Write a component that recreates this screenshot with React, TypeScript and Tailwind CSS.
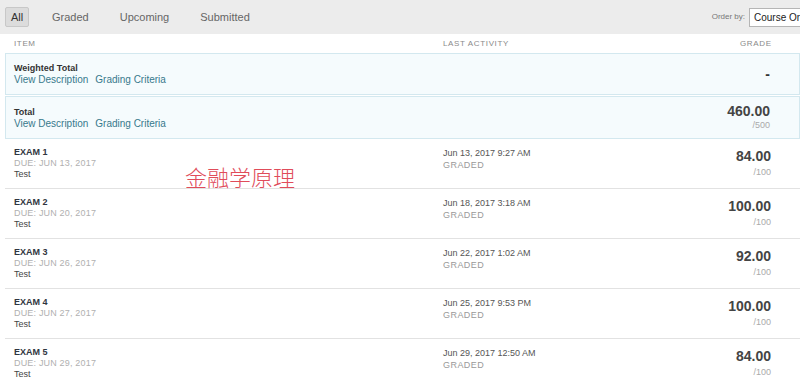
const exams = [
  { name: "EXAM 1", due: "DUE: JUN 13, 2017", activity: "Jun 13, 2017 9:27 AM", grade: "84.00" },
  { name: "EXAM 2", due: "DUE: JUN 20, 2017", activity: "Jun 18, 2017 3:18 AM", grade: "100.00" },
  { name: "EXAM 3", due: "DUE: JUN 26, 2017", activity: "Jun 22, 2017 1:02 AM", grade: "92.00" },
  { name: "EXAM 4", due: "DUE: JUN 27, 2017", activity: "Jun 25, 2017 9:53 PM", grade: "100.00" },
  { name: "EXAM 5", due: "DUE: JUN 29, 2017", activity: "Jun 29, 2017 12:50 AM", grade: "84.00" },
]

const tabs = ["All", "Graded", "Upcoming", "Submitted"]

const App = () => {
  return (
    <div className="relative h-[386px] w-[800px] overflow-hidden bg-white font-[family-name:'Liberation_Sans',Arial,sans-serif] text-[#333]">
      <div className="flex h-[34px] items-center justify-between bg-[#ececec] pl-[5px]">
        <div className="flex items-center">
          {tabs.map((tab, i) =>
            i === 0 ? (
              <span
                key={tab}
                className="mr-[23px] flex h-[20px] w-[24px] items-center justify-center rounded-[2px] border border-[#c8c8c8] bg-[#dcdcdc] text-[11px] text-[#333]"
              >
                {tab}
              </span>
            ) : (
              <span key={tab} className="mr-[31px] text-[11px] text-[#666]">
                {tab}
              </span>
            ),
          )}
        </div>
        <div className="mr-[-30px] flex shrink-0 items-center">
          <span className="mr-[4px] text-[8px] text-[#777]">Order by:</span>
          <div className="flex h-[19px] w-[81px] shrink-0 items-center overflow-hidden whitespace-nowrap border border-[#b5b5b5] bg-white pl-[4px] text-[10px] text-[#222]">
            Course Order
          </div>
        </div>
      </div>

      <div className="flex h-[19px] items-center text-[8px] tracking-[0.08em] text-[#8a8a8a]">
        <span className="w-[443px] pl-[14px]">ITEM</span>
        <span className="flex-1">LAST ACTIVITY</span>
        <span className="w-[60px] pr-[30px] text-right">GRADE</span>
      </div>

      <div className="ml-[5px] border border-[#d3e8ef] bg-[#f5fbfd]">
        <div className="flex h-[40px] items-center">
          <div className="flex-1 pl-[8px]">
            <div className="text-[9px] font-bold leading-[12px] text-[#333]">Weighted Total</div>
            <div className="text-[10px] leading-[12px] text-[#37798c]">
              View Description<span className="ml-[7px]">Grading Criteria</span>
            </div>
          </div>
          <div className="pr-[29px] text-[14px] font-bold text-[#333]">-</div>
        </div>
      </div>
      <div className="ml-[5px] mt-[1px] border border-[#d3e8ef] bg-[#f5fbfd]">
        <div className="flex h-[41px] items-center">
          <div className="flex-1 pl-[8px]">
            <div className="text-[9px] font-bold leading-[12px] text-[#333]">Total</div>
            <div className="text-[10px] leading-[12px] text-[#37798c]">
              View Description<span className="ml-[7px]">Grading Criteria</span>
            </div>
          </div>
          <div className="flex flex-col items-end pr-[29px]">
            <span className="text-[14px] font-bold leading-[16px] text-[#444]">460.00</span>
            <span className="text-[9px] leading-[13px] text-[#aaa]">/500</span>
          </div>
        </div>
      </div>

      {exams.map((exam, i) => (
        <div
          key={exam.name}
          className={`ml-[5px] flex h-[50px] ${i < exams.length - 1 ? "border-b border-[#e2e2e2]" : ""}`}
        >
          <div className="w-[438px] pl-[9px] pt-[7px]">
            <div className="text-[9px] font-bold leading-[12px] text-[#2f3540]">{exam.name}</div>
            <div className="text-[9px] leading-[11px] tracking-[0.02em] text-[#b0b0b0]">{exam.due}</div>
            <div className="text-[9px] leading-[11px] text-[#444]">Test</div>
          </div>
          <div className="flex-1 pt-[8px]">
            <div className="text-[9px] leading-[12px] text-[#555]">{exam.activity}</div>
            <div className="text-[9px] leading-[13px] tracking-[0.05em] text-[#999]">GRADED</div>
          </div>
          <div className="flex flex-col items-end pr-[29px] pt-[9px]">
            <span className="text-[14px] font-bold leading-[17px] text-[#444]">{exam.grade}</span>
            <span className="text-[9px] leading-[15px] text-[#aaa]">/100</span>
          </div>
        </div>
      ))}

      <div className="absolute left-[185px] top-[163px] font-[family-name:'Noto_Sans_CJK_SC',sans-serif] text-[22px] font-light leading-[26px] text-[#e04c5a]">
        金融学原理
      </div>
    </div>
  )
}

export default App
